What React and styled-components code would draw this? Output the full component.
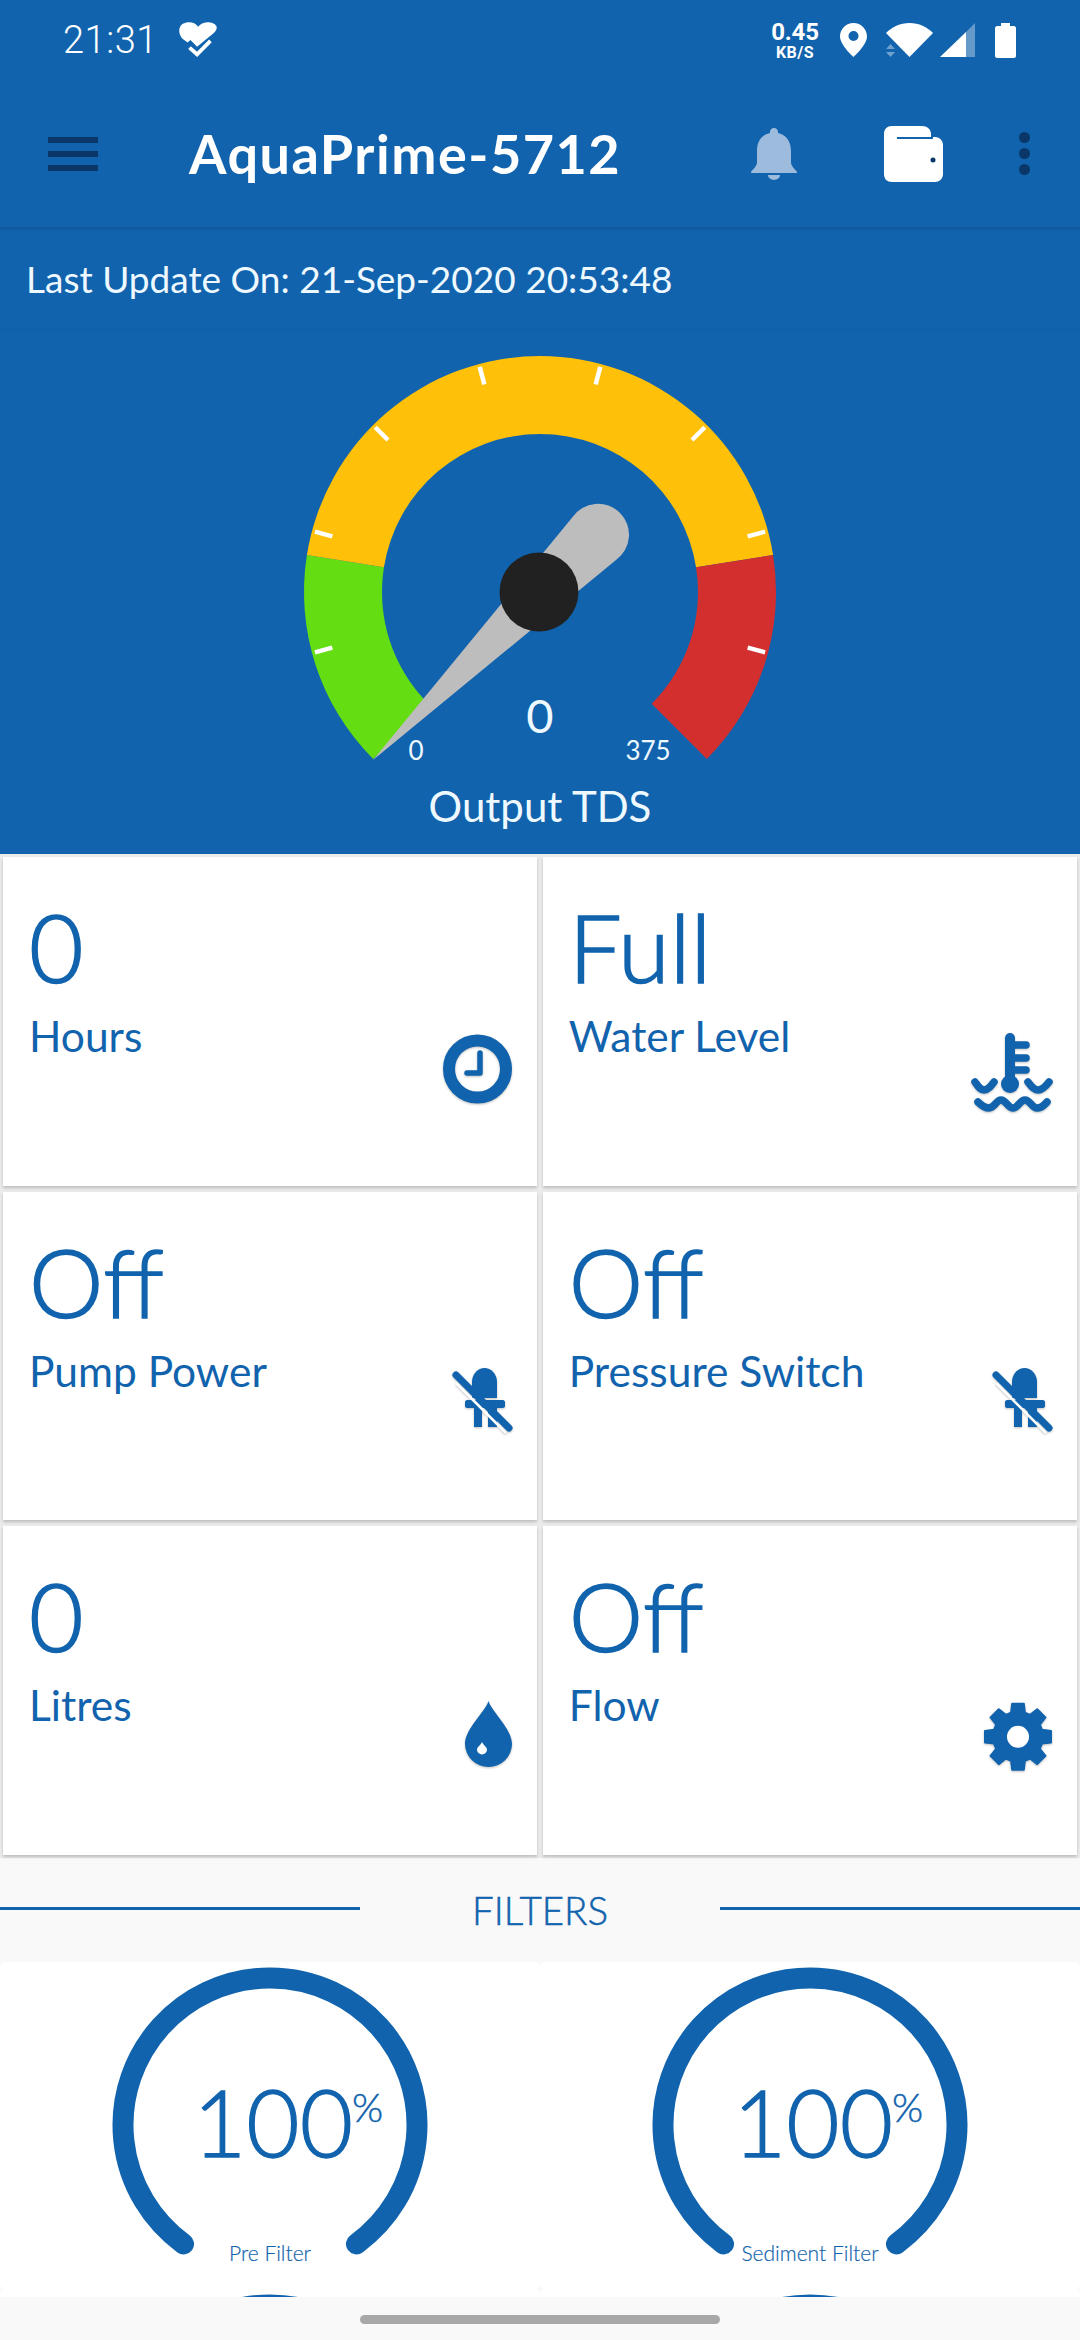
import React from 'react';
import styled, { createGlobalStyle } from 'styled-components';

const BLUE = '#1163ad';
const DARK = '#0a3768';
const TEXT = '#eef9ff';

const GlobalStyle = createGlobalStyle`
  html, body { margin: 0; padding: 0; background: #f9f9f9; }
  body { font-family: Lato, "Open Sans", sans-serif; }
`;

const Screen = styled.div`
  width: 1080px;
  height: 2340px;
  display: flex;
  flex-direction: column;
  overflow: hidden;
  background: #f9f9f9;
`;

const Scroll = styled.div`
  flex: 1;
  min-height: 0;
  overflow: hidden;
`;

const Header = styled.div`
  background: ${BLUE};
`;

const StatusBar = styled.div`
  height: 80px;
  display: flex;
  align-items: center;
  padding: 0 64px 0 63px;
  color: #fff;
`;

const Time = styled.span`
  font-family: Roboto, sans-serif;
  font-weight: 300;
  font-size: 38px;
  letter-spacing: 0.5px;
  margin-right: 21px;
`;

const Speed = styled.div`
  margin-left: auto;
  width: 50px;
  display: flex;
  flex-direction: column;
  align-items: center;
  font-family: Roboto, sans-serif;
  font-weight: 700;
  margin-right: 20px;
`;

const SpeedValue = styled.span`
  font-size: 24px;
  line-height: 24px;
  letter-spacing: -0.2px;
`;

const SpeedUnit = styled.span`
  font-size: 16px;
  line-height: 16px;
  margin-top: 1px;
  letter-spacing: 0.5px;
`;

const StatusIcon = styled.svg`
  display: block;
  flex: none;
  margin-left: ${p => p.$gap || 0}px;
`;

const AppBar = styled.div`
  height: 147px;
  display: flex;
  align-items: center;
  padding: 0 50.5px 0 48px;
  box-shadow: 0 2px 3px rgba(0, 0, 0, 0.14);
  position: relative;
`;

const Menu = styled.div`
  width: 50px;
  display: flex;
  flex-direction: column;
  gap: 8px;
  flex: none;
`;

const MenuBar = styled.span`
  height: 6px;
  background: ${DARK};
`;

const Title = styled.h1`
  flex: 1;
  margin: 0 0 0 91px;
  font-size: 54px;
  font-weight: 700;
  letter-spacing: 1.5px;
  color: #fff;
  white-space: nowrap;
`;

const BarIcon = styled.svg`
  display: block;
  flex: none;
  margin-right: ${p => p.$gap || 0}px;
`;

const Kebab = styled.div`
  display: flex;
  flex-direction: column;
  gap: 5px;
  flex: none;
`;

const KebabDot = styled.span`
  width: 11px;
  height: 11px;
  border-radius: 50%;
  background: ${DARK};
`;

const UpdateStrip = styled.div`
  height: 102px;
  display: flex;
  align-items: center;
  padding-left: 26px;
  border-bottom: 1px solid #105fa6;
  color: ${TEXT};
  font-size: 37px;
`;

const GaugeSection = styled.div`
  height: 524px;
  display: flex;
  flex-direction: column;
  align-items: center;
`;

const GaugeSvg = styled.svg`
  display: block;
  margin-top: 10px;
`;

const GaugeCaption = styled.div`
  margin-top: 11px;
  font-size: 42px;
  line-height: 50px;
  color: ${TEXT};
`;

const GaugeText = styled.text`
  font-family: Lato, sans-serif;
  font-size: ${p => p.$size}px;
  fill: ${TEXT};
  text-anchor: middle;
`;

const Grid = styled.div`
  display: grid;
  grid-template-columns: 1fr 1fr;
  grid-auto-rows: 328.5px;
  gap: 6px;
  padding: 3px 3.5px 3px 3px;
  background: #ebebeb;
`;

const Card = styled.div`
  display: flex;
  justify-content: space-between;
  background: #fff;
  box-shadow: 0 2px 3px rgba(0, 0, 0, 0.2);
  color: ${BLUE};
`;

const CardText = styled.div`
  padding: 40px 0 0 26px;
`;

const CardValue = styled.div`
  font-size: 94px;
  line-height: 100px;
  font-weight: 300;
  -webkit-text-stroke: 1.6px ${BLUE};
`;

const CardLabel = styled.div`
  margin-top: 14px;
  font-size: 42.5px;
  line-height: 50px;
`;

const CardIcon = styled.svg`
  display: block;
  flex: none;
  width: 100px;
  height: 100px;
  margin: 163px 12px 0 0;
  color: ${BLUE};
  filter: drop-shadow(0 1px 1px rgba(0, 0, 0, 0.25));
`;

const FiltersHeader = styled.div`
  height: 104.5px;
  display: flex;
  align-items: center;
`;

const Rule = styled.span`
  flex: 1;
  height: 3px;
  background: ${BLUE};
  margin-top: -3px;
`;

const FiltersTitle = styled.div`
  width: 360px;
  text-align: center;
  font-size: 38.5px;
  font-weight: 300;
  -webkit-text-stroke: 0.5px ${BLUE};
  color: ${BLUE};
`;

const FilterGrid = styled.div`
  display: grid;
  grid-template-columns: 1fr 1fr;
  grid-auto-rows: 327px;
`;

const FilterCard = styled.div`
  background: #fff;
  border-radius: 5px;
`;

const DialSvg = styled.svg`
  display: block;
`;

const DialText = styled.text`
  font-family: Lato, sans-serif;
  font-size: ${p => p.$size}px;
  font-weight: ${p => p.$weight || 400};
  fill: ${BLUE};
  stroke: ${BLUE};
  stroke-width: ${p => p.$stroke || 0}px;
  text-anchor: ${p => p.$anchor || 'middle'};
`;

const NavBar = styled.div`
  height: 43px;
  flex: none;
  display: flex;
  justify-content: center;
  padding-top: 18px;
  box-sizing: border-box;
`;

const NavPill = styled.span`
  width: 360px;
  height: 9px;
  border-radius: 5px;
  background: #a8a8a8;
`;

// angles in degrees, clockwise from +x, as svg draws them
const polar = (cx, cy, r, deg) => {
  const a = (deg * Math.PI) / 180;
  return [cx + r * Math.cos(a), cy + r * Math.sin(a)];
};

const arc = (cx, cy, r, from, to) => {
  const [x0, y0] = polar(cx, cy, r, from);
  const [x1, y1] = polar(cx, cy, r, to);
  return `M${x0} ${y0}A${r} ${r} 0 ${to - from > 180 ? 1 : 0} 1 ${x1} ${y1}`;
};

const band = (from, to) => {
  const [x, y] = polar(540, 592, 158, to);
  const [x2, y2] = polar(540, 592, 158, from);
  return `${arc(540, 592, 236, from, to)}L${x} ${y}A158 158 0 ${to - from > 180 ? 1 : 0} 0 ${x2} ${y2}Z`;
};

const gearPath = (() => {
  const cx = 53;
  const cy = 47.7;
  let d = '';
  for (let i = 0; i < 8; i++) {
    const a = i * 45;
    const pts = [
      polar(cx, cy, 25, a - 16),
      polar(cx, cy, 33.5, a - 10),
      polar(cx, cy, 33.5, a + 10),
      polar(cx, cy, 25, a + 16)
    ];
    d += pts.map((p, j) => `${i === 0 && j === 0 ? 'M' : 'L'}${p[0]} ${p[1]}`).join('');
  }
  return `${d}Z`;
})();

const ticks = [165, 195, 225, 255, 285, 315, 345, 375];

const Gauge = () => (
  <GaugeSvg width="540" height="430" viewBox="270 340 540 430">
    <path d={band(135, 189)} fill="#64dd12" />
    <path d={band(189, 351)} fill="#ffc00a" />
    <path d={band(351, 405)} fill="#d32f2f" />
    {ticks.map(t => {
      const [x0, y0] = polar(540, 592, 233, t);
      const [x1, y1] = polar(540, 592, 215, t);
      return <line key={t} x1={x0} y1={y0} x2={x1} y2={y1} stroke="#fff" strokeWidth="4.5" />;
    })}
    <path d="M373 760L616 560A31 31 0 1 0 572.6 517Z" fill="#bdbdbd" />
    <circle cx="539" cy="592" r="39.5" fill="#212121" />
    <GaugeText x="540" y="733" $size="47">0</GaugeText>
    <GaugeText x="416" y="760" $size="26">0</GaugeText>
    <GaugeText x="648" y="760" $size="26">375</GaugeText>
  </GaugeSvg>
);

const ClockIcon = () => (
  <CardIcon viewBox="0 0 100 100">
    <circle cx="52.5" cy="49" r="28.5" fill="none" stroke="currentColor" strokeWidth="12" />
    <path d="M55 33V53H42" fill="none" stroke="currentColor" strokeWidth="5.5" strokeLinejoin="round" strokeLinecap="round" />
  </CardIcon>
);

const CoolantIcon = () => (
  <CardIcon viewBox="0 0 100 100">
    <g fill="none" stroke="currentColor" strokeWidth="7.5" strokeLinecap="round" strokeLinejoin="round">
      <path d="M45 18V64" strokeWidth="10" />
      <path d="M46 25H61M46 38H61M46 50H61" />
      <path d="M10 62C13 66 15 70 19 70C23 70 26 66 29 62" />
      <path d="M63 62C66 66 69 70 73 70C77 70 81 66 84 62" />
      <path d="M13 82C16 85 19 88 24 88C30 88 31 80 36 80C41 80 43 88 48 88C53 88 55 80 60 80C65 80 67 88 72 88C77 88 79 85 82 82" />
    </g>
    <circle cx="45" cy="64" r="9" fill="currentColor" />
  </CardIcon>
);

const PlugOffIcon = () => (
  <CardIcon viewBox="0 0 100 100">
    <path d="M47 43V27C47 19 53 13 59.5 13C66 13 72 19 72 27V43Z" fill="currentColor" />
    <path d="M42 45H78C79 45 80 46 80 47V51C80 52 79 53 78 53H72V72H63V53H57V72H49V53H42C41 53 40 52 40 51V47C40 46 41 45 42 45Z" fill="currentColor" />
    <path d="M32 25L82 75" stroke="#fff" strokeWidth="2.5" transform="translate(-1 3)" />
    <path d="M31 20L84 73" stroke="currentColor" strokeWidth="7" strokeLinecap="round" />
  </CardIcon>
);

const DropIcon = () => (
  <CardIcon viewBox="0 0 100 100">
    <path d="M63.5 12C60 23 40 40 40 55A23.5 23 0 0 0 87 55C87 40 67 23 63.5 12Z" fill="currentColor" />
    <path d="M57 53C56 56 52 58 52 60.5A5 5 0 0 0 62 60.5C62 58 58 56 57 53Z" fill="#fff" />
  </CardIcon>
);

const GearIcon = () => (
  <CardIcon viewBox="0 0 100 100">
    <path d={gearPath} fill="currentColor" stroke="currentColor" strokeWidth="2" strokeLinejoin="round" />
    <circle cx="53" cy="47.7" r="11" fill="#fff" />
  </CardIcon>
);

const metrics = [
  { value: '0', label: 'Hours', icon: ClockIcon },
  { value: 'Full', label: 'Water Level', icon: CoolantIcon },
  { value: 'Off', label: 'Pump Power', icon: PlugOffIcon },
  { value: 'Off', label: 'Pressure Switch', icon: PlugOffIcon },
  { value: '0', label: 'Litres', icon: DropIcon },
  { value: 'Off', label: 'Flow', icon: GearIcon }
];

const filters = [{ label: 'Pre Filter', value: 100 }, { label: 'Sediment Filter', value: 100 }, {}, {}];

const Dial = ({ label, value }) => (
  <DialSvg width="540" height="327" viewBox="0 0 540 327">
    <path d={arc(270, 163, 147, 126, 414)} fill="none" stroke={BLUE} strokeWidth="21" strokeLinecap="round" />
    {label && (
      <>
        <DialText x="273" y="195" $size="92" $weight="300" $stroke="1.3">{value}</DialText>
        <DialText x="352" y="160" $size="40" $weight="300" $stroke="0.5" $anchor="start">%</DialText>
        <DialText x="270" y="299" $size="21" $weight="300" $stroke="0.2">{label}</DialText>
      </>
    )}
  </DialSvg>
);

export default function App() {
  return (
    <Screen>
      <GlobalStyle />
      <Scroll>
        <Header>
          <StatusBar>
            <Time>21:31</Time>
            <StatusIcon width="40" height="40" viewBox="8 6 42 40">
              <path d="M28 12C25 7 17 6 12 9C7 12 7 20 12 25L17 28.5L20 26L27 33L41 21.5C46 18 49 14 47 11C44 6 33 6 28 12Z" fill="#fff" />
              <path d="M19 34L27 41L41 27" fill="none" stroke="#fff" strokeWidth="4" />
            </StatusIcon>
            <Speed>
              <SpeedValue>0.45</SpeedValue>
              <SpeedUnit>KB/S</SpeedUnit>
            </Speed>
            <StatusIcon width="27" height="34" viewBox="0 0 27 34">
              <path fillRule="evenodd" d="M13.5 0C6 0 0 6 0 13.5C0 22 13.5 34 13.5 34S27 22 27 13.5C27 6 21 0 13.5 0ZM13.5 8A5 5 0 1 1 13.5 18A5 5 0 1 1 13.5 8Z" fill="#fff" />
            </StatusIcon>
            <StatusIcon width="47" height="34" viewBox="0 0 47 34" $gap="19">
              <path d="M23.5 34L0 10C6 4 14 0 23.5 0S41 4 47 10Z" fill="#fff" />
              <path d="M4.5 21L0 26H9ZM0 29H9L4.5 34Z" fill="#fff" opacity="0.4" />
            </StatusIcon>
            <StatusIcon width="35" height="34" viewBox="0 0 35 34" $gap="7">
              <path d="M0 34L26 9V34Z" fill="#fff" />
              <path d="M26 9L35 0V34H26Z" fill="#fff" opacity="0.35" />
            </StatusIcon>
            <StatusIcon width="21" height="35" viewBox="0 0 21 35" $gap="20">
              <path d="M6 0H15V3H19C20 3 21 4 21 5V33C21 34 20 35 19 35H2C1 35 0 34 0 33V5C0 4 1 3 2 3H6Z" fill="#fff" />
            </StatusIcon>
          </StatusBar>
          <AppBar>
            <Menu>
              <MenuBar />
              <MenuBar />
              <MenuBar />
            </Menu>
            <Title>AquaPrime-5712</Title>
            <BarIcon width="46" height="52" viewBox="0 0 46 52" $gap="87">
              <path d="M23 0C20.500 0 19 2 19 4V5C10 7 6 14 6 23V34C6 38 3 40 0 44V45H46V44C43 40 40 38 40 34V23C40 14 36 7 27 5V4C27 2 25.500 0 23 0Z" fill="#9dbbdc" />
              <path d="M17 47H29A6 5 0 0 1 17 47Z" fill="#9dbbdc" />
            </BarIcon>
            <BarIcon width="59" height="56" viewBox="0 0 59 56" $gap="75.5">
              <path d="M8 0H38C43 0 47 3 47 8V11H51C56 11 59 15 59 19V48C59 53 55 56 51 56H8C3 56 0 53 0 48V8C0 3 3 0 8 0Z" fill="#fff" />
              <path d="M13 12H49" stroke={BLUE} strokeWidth="2" />
              <circle cx="49" cy="34" r="2.500" fill={DARK} />
            </BarIcon>
            <Kebab>
              <KebabDot />
              <KebabDot />
              <KebabDot />
            </Kebab>
          </AppBar>
          <UpdateStrip>Last Update On: 21-Sep-2020 20:53:48</UpdateStrip>
          <GaugeSection>
            <Gauge />
            <GaugeCaption>Output TDS</GaugeCaption>
          </GaugeSection>
        </Header>
        <Grid>
          {metrics.map(m => (
            <Card key={m.label}>
              <CardText>
                <CardValue>{m.value}</CardValue>
                <CardLabel>{m.label}</CardLabel>
              </CardText>
              <m.icon />
            </Card>
          ))}
        </Grid>
        <FiltersHeader>
          <Rule />
          <FiltersTitle>FILTERS</FiltersTitle>
          <Rule />
        </FiltersHeader>
        <FilterGrid>
          {filters.map((f, i) => (
            <FilterCard key={i}>
              <Dial label={f.label} value={f.value} />
            </FilterCard>
          ))}
        </FilterGrid>
      </Scroll>
      <NavBar>
        <NavPill />
      </NavBar>
    </Screen>
  );
}
